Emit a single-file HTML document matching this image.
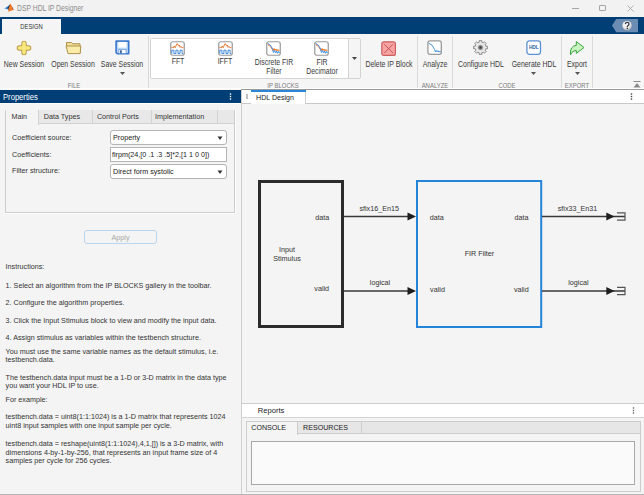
<!DOCTYPE html>
<html><head><meta charset="utf-8">
<style>
*{margin:0;padding:0;box-sizing:border-box}
html,body{width:644px;height:495px;overflow:hidden;background:#f4f4f4;font-family:"Liberation Sans",sans-serif;color:#333}
.a{position:absolute}
.t{position:absolute;white-space:nowrap;line-height:1}
/* title bar */
#title{left:0;top:0;width:644px;height:17px;background:#f2f2f2}
#band{left:0;top:17px;width:644px;height:17px;background:#003e76}
#strip{left:0;top:34px;width:644px;height:55px;background:#f5f5f5}
.lbl{font-size:8.2px;color:#3a3a3a;text-align:center;transform:scaleX(0.845)}
.sec{font-size:7px;color:#7c7c7c;text-align:center;transform:scaleX(0.85)}
.sep{position:absolute;top:36px;width:1px;height:52px;background:#dadada}
.content{font-size:7.2px;color:#333}
</style></head><body>

<!-- Title bar -->
<div class="a" id="title"></div>
<svg class="a" style="left:0;top:0" width="16" height="14" viewBox="0 0 16 14">
  <polygon points="4.3,8.4 9.3,5.2 8.4,9.6" fill="#3d8ee0"/>
  <polygon points="7.2,8 10.6,3.6 9,10.4" fill="#283848"/>
  <polygon points="10.7,3.6 13.2,10 8.2,11.8 8.6,8.4" fill="#f07c28"/>
  <polygon points="11.2,4.8 14,10.3 12.6,9.6" fill="#b8483a"/>
</svg>
<div class="t" style="left:16.8px;top:3.6px;font-size:8.6px;color:#8c8c8c;transform:scaleX(0.79);transform-origin:0 0">DSP HDL IP Designer</div>
<div class="a" style="left:572px;top:8px;width:7px;height:1px;background:#a6a6a6"></div>
<div class="a" style="left:599px;top:5px;width:7px;height:6px;border:1px solid #a6a6a6;border-radius:1px"></div>
<svg class="a" style="left:627px;top:5px" width="7" height="7" viewBox="0 0 7 7"><path d="M0.5 0.5L6.5 6.5M6.5 0.5L0.5 6.5" stroke="#a6a6a6" stroke-width="0.9"/></svg>

<!-- Blue band -->
<div class="a" id="band"></div>
<div class="a" style="left:2px;top:19px;width:59px;height:15px;background:#f5f5f5"></div>
<div class="t" style="left:2px;top:23px;width:59px;text-align:center;font-size:7.3px;color:#333;transform:scaleX(0.8)">DESIGN</div>
<svg class="a" style="left:612px;top:19px" width="26" height="14" viewBox="0 0 26 14">
  <defs><radialGradient id="hg" cx="0.4" cy="0.35" r="0.7"><stop offset="0" stop-color="#ffffff"/><stop offset="0.6" stop-color="#e8e8e8"/><stop offset="1" stop-color="#a8adb5"/></radialGradient></defs>
  <polygon points="0,6.6 4.2,0 26,0 26,13.3 4.2,13.3" fill="#6b8cb3"/>
  <circle cx="15.1" cy="6.6" r="4.7" fill="url(#hg)"/>
  <path d="M13.3 5.1Q13.4 3.3 15.2 3.3Q17 3.3 17 4.9Q17 5.9 16 6.5Q15.3 6.9 15.3 7.9" fill="none" stroke="#343a48" stroke-width="1.3"/>
  <rect x="14.6" y="8.7" width="1.4" height="1.4" fill="#343a48"/>
</svg>

<!-- Toolstrip -->
<div class="a" id="strip"></div>
<div class="a" style="left:0;top:88px;width:644px;height:1px;background:#ffffff"></div>
<div class="a" style="left:241px;top:89px;width:403px;height:1px;background:#9a9a9a"></div>


<!-- separators -->
<div class="sep" style="left:148px"></div>
<div class="sep" style="left:417px"></div>
<div class="sep" style="left:452px"></div>
<div class="sep" style="left:561px"></div>
<div class="sep" style="left:592px"></div>

<!-- FILE -->
<svg class="a" style="left:16px;top:40px" width="16" height="16" viewBox="0 0 16 16">
  <path d="M8 3.4V12.6M3.4 8H12.6" stroke="#b99b45" stroke-width="5.4" stroke-linecap="round"/><path d="M8 3.4V12.6M3.4 8H12.6" stroke="#f7e77c" stroke-width="3.6" stroke-linecap="round"/>
</svg>
<svg class="a" style="left:65px;top:41px" width="17" height="14" viewBox="0 0 17 14">
  <path d="M1.5 5V1.5h5l1.3 1.3h7.2V12" fill="#efdc98" stroke="#b0924c" stroke-width="1" stroke-linejoin="round"/>
  <path d="M1 5h14.8l-0.6 7.6H3z" fill="#f8eca8" stroke="#b0924c" stroke-width="1" stroke-linejoin="round"/>
</svg>
<svg class="a" style="left:114.8px;top:40px" width="15" height="15" viewBox="0 0 15 15">
  <path d="M1.1 1.1h12.6v12.6H2.3l-1.2-1.2z" fill="#b9d5f4" stroke="#3878cc" stroke-width="1.6" stroke-linejoin="round"/>
  <rect x="3.2" y="1.9" width="8.4" height="5.8" fill="#ffffff"/>
  <rect x="3.9" y="9.4" width="7.1" height="4" fill="#ffffff" stroke="#4f8ad6" stroke-width="0.6"/>
  <rect x="5.2" y="10.2" width="1.5" height="3.1" fill="#1a4a88"/>
</svg>
<div class="t lbl" style="left:-16px;top:60.9px;width:80px">New Session</div>
<div class="t lbl" style="left:33px;top:60.9px;width:80px">Open Session</div>
<div class="t lbl" style="left:82px;top:60.9px;width:80px">Save Session</div>
<svg class="a" style="left:120px;top:72px" width="5" height="3" viewBox="0 0 5 3"><path d="M0 0h5l-2.5 3z" fill="#555"/></svg>
<div class="t sec" style="left:34px;top:82.3px;width:80px">FILE</div>

<!-- IP BLOCKS gallery -->
<div class="a" style="left:150px;top:38px;width:211px;height:41px;border:1px solid #d4d4d4;border-radius:2px;background:#f5f5f5"></div>
<div class="a" style="left:151px;top:39px;width:197px;height:39px;background:#ffffff"></div>
<div class="a" style="left:348px;top:39px;width:1px;height:39px;background:#d4d4d4"></div>
<svg class="a" style="left:352px;top:57px" width="5" height="3" viewBox="0 0 5 3"><path d="M0 0h5l-2.5 3z" fill="#444"/></svg>

<svg class="a" style="left:170px;top:41.3px" width="15" height="15" viewBox="0 0 15 15">
  <rect x="0.75" y="0.75" width="13.5" height="13.5" rx="2" fill="#fff" stroke="#999999" stroke-width="1.2"/>
  <path d="M1.6 6.9L2.6 5.9L3.4 7.1L4.3 5.1L5.3 6.6L6.3 4.1L7.3 2.6L8.3 4.6L9.1 3.9L10.1 6.4L11.1 5.4L12.1 6.9L13.4 6.1" fill="none" stroke="#e8752c" stroke-width="1"/>
  <path d="M1.8 12.6V9.2H3.9V12.6H5.9V9.2H8V12.6H10V9.2H12.1V12.6H13.2" fill="none" stroke="#3f8ad8" stroke-width="1"/>
</svg>
<svg class="a" style="left:218px;top:41.3px" width="15" height="15" viewBox="0 0 15 15">
  <rect x="0.75" y="0.75" width="13.5" height="13.5" rx="2" fill="#fff" stroke="#999999" stroke-width="1.2"/>
  <path d="M1.6 6.9L2.6 5.9L3.4 7.1L4.3 5.1L5.3 6.6L6.3 4.1L7.3 2.6L8.3 4.6L9.1 3.9L10.1 6.4L11.1 5.4L12.1 6.9L13.4 6.1" fill="none" stroke="#e8752c" stroke-width="1"/>
  <path d="M1.8 12.6V9.2H3.9V12.6H5.9V9.2H8V12.6H10V9.2H12.1V12.6H13.2" fill="none" stroke="#3f8ad8" stroke-width="1"/>
</svg>
<svg class="a" style="left:266px;top:41.3px" width="15" height="15" viewBox="0 0 15 15">
  <rect x="0.75" y="0.75" width="13.5" height="13.5" rx="2" fill="#fff" stroke="#999999" stroke-width="1.2"/>
  <path d="M1.6 3.2Q5 5 7 9.5L8 7.5L9 9.5L10 8L11 10L12 8.5L13.2 10" fill="none" stroke="#e8752c" stroke-width="1"/>
  <path d="M1.6 2.4Q6 4 7.5 11.5L8.6 9.5L9.6 12L10.6 10L11.6 12.3L12.6 10.5L13.3 12" fill="none" stroke="#3f8ad8" stroke-width="1"/>
</svg>
<svg class="a" style="left:314px;top:41.3px" width="15" height="15" viewBox="0 0 15 15">
  <rect x="0.75" y="0.75" width="13.5" height="13.5" rx="2" fill="#fff" stroke="#999999" stroke-width="1.2"/>
  <path d="M1.6 3.2Q5 5 7 9.5L8 7.5L9 9.5L10 8L11 10L12 8.5L13.2 10" fill="none" stroke="#e8752c" stroke-width="1"/>
  <path d="M1.6 2.4Q6 4 7.5 11.5L8.6 9.5L9.6 12L10.6 10L11.6 12.3L12.6 10.5L13.3 12" fill="none" stroke="#3f8ad8" stroke-width="1"/>
</svg>
<div class="t lbl" style="left:138px;top:58px;width:80px">FFT</div>
<div class="t lbl" style="left:185px;top:58px;width:80px">IFFT</div>
<div class="t lbl" style="left:234px;top:57.6px;width:80px;line-height:9.4px">Discrete FIR<br>Filter</div>
<div class="t lbl" style="left:282px;top:57.6px;width:80px;line-height:9.4px">FIR<br>Decimator</div>

<svg class="a" style="left:381.3px;top:40.5px" width="16" height="15" viewBox="0 0 16 15">
  <rect x="0.8" y="0.8" width="13.6" height="13.6" rx="2" fill="#f5a3a3" stroke="#cf5d5d" stroke-width="1.2"/>
  <path d="M3.3 3.3L12 12M12 3.3L3.3 12" stroke="#c24c4c" stroke-width="0.9"/>
</svg>
<div class="t lbl" style="left:349px;top:60.9px;width:80px">Delete IP Block</div>
<div class="t sec" style="left:243px;top:82.3px;width:80px">IP BLOCKS</div>

<!-- ANALYZE -->
<svg class="a" style="left:427px;top:40px" width="16" height="15" viewBox="0 0 16 15">
  <rect x="0.9" y="0.9" width="13.4" height="13.4" rx="2" fill="#fff" stroke="#9a9a9a" stroke-width="1.3"/>
  <path d="M1.6 3.2Q5.5 3.8 7.6 9.6L8.3 11.8L9.1 10.2L10 11.9L11 10.6L11.9 12.1L12.8 11L13.6 12.1" fill="none" stroke="#4a97e2" stroke-width="1"/>
</svg>
<div class="t lbl" style="left:395px;top:60.9px;width:80px">Analyze</div>
<div class="t sec" style="left:395px;top:82.3px;width:80px">ANALYZE</div>

<!-- CODE -->
<svg class="a" style="left:473px;top:40px" width="15" height="15" viewBox="-7.5 -7.5 15 15">
  <defs><radialGradient id="gg"><stop offset="0" stop-color="#3a3a3a"/><stop offset="0.5" stop-color="#777"/><stop offset="1" stop-color="#e6e6e6"/></radialGradient></defs>
  <path d="M-1.39 -6.86 L1.39 -6.86 L1.19 -5.27 L2.88 -4.57 L3.87 -5.83 L5.83 -3.87 L4.57 -2.88 L5.27 -1.19 L6.86 -1.39 L6.86 1.39 L5.27 1.19 L4.57 2.88 L5.83 3.87 L3.87 5.83 L2.88 4.57 L1.19 5.27 L1.39 6.86 L-1.39 6.86 L-1.19 5.27 L-2.88 4.57 L-3.87 5.83 L-5.83 3.87 L-4.57 2.88 L-5.27 1.19 L-6.86 1.39 L-6.86 -1.39 L-5.27 -1.19 L-4.57 -2.88 L-5.83 -3.87 L-3.87 -5.83 L-2.88 -4.57 L-1.19 -5.27Z" fill="#e9e9e9" stroke="#858585" stroke-width="0.9" stroke-linejoin="round"/>
  <circle r="3.2" fill="url(#gg)"/>
</svg>
<svg class="a" style="left:526px;top:40px" width="16" height="15" viewBox="0 0 16 15">
  <rect x="0.9" y="0.9" width="13.6" height="13.4" rx="2.5" fill="#fff" stroke="#5b90d3" stroke-width="1.3"/>
  <text x="7.7" y="9.4" font-family="Liberation Sans" font-weight="bold" font-size="4.9" fill="#2f5f9a" text-anchor="middle" letter-spacing="-0.2">HDL</text>
</svg>
<div class="t lbl" style="left:441px;top:60.9px;width:80px">Configure HDL</div>
<div class="t lbl" style="left:494px;top:60.9px;width:80px">Generate HDL</div>
<svg class="a" style="left:531px;top:72px" width="5" height="3" viewBox="0 0 5 3"><path d="M0 0h5l-2.5 3z" fill="#555"/></svg>
<div class="t sec" style="left:467px;top:82.3px;width:80px">CODE</div>

<!-- EXPORT -->
<svg class="a" style="left:569px;top:41px" width="16" height="15" viewBox="0 0 16 15">
  <path d="M7.3 0.6L15 6.5L7.3 12.4V9.4Q3.4 9.2 1.4 13.8Q0.8 5 7.3 4.4Z" fill="#c9f3c0" stroke="#3ca63c" stroke-width="1" stroke-linejoin="round"/>
</svg>
<div class="t lbl" style="left:537px;top:60.9px;width:80px">Export</div>
<svg class="a" style="left:575px;top:72px" width="5" height="3" viewBox="0 0 5 3"><path d="M0 0h5l-2.5 3z" fill="#555"/></svg>
<div class="t sec" style="left:537px;top:82.3px;width:80px">EXPORT</div>
<svg class="a" style="left:633px;top:81px" width="8" height="7" viewBox="0 0 8 7"><rect x="0.5" y="0" width="7" height="1" fill="#8a8a8a"/><path d="M0.5 6.5h7l-3.5-4.5z" fill="#8a8a8a"/></svg>


<!-- ===== Properties panel ===== -->
<div class="a" style="left:0;top:90px;width:241px;height:13px;background:#003e76"></div>
<div class="t" style="left:3.3px;top:92.9px;font-size:8.9px;color:#ffffff;transform:scaleX(0.86);transform-origin:0 0">Properties</div>
<svg class="a" style="left:229px;top:93px" width="3" height="7" viewBox="0 0 3 7"><rect x="0.8" y="0.3" width="1.4" height="1.4" fill="#fff"/><rect x="0.8" y="2.8" width="1.4" height="1.4" fill="#fff"/><rect x="0.8" y="5.3" width="1.4" height="1.4" fill="#fff"/></svg>
<div class="a" style="left:0;top:103px;width:241px;height:1px;background:#ffffff"></div>
<div class="a" style="left:241px;top:90px;width:1px;height:404px;background:#cfcfcf"></div>

<!-- tab group -->
<div class="a" style="left:5px;top:110px;width:230px;height:103px;border:1px solid #cdcdcd;background:#f4f4f4"></div>
<div class="a" style="left:235px;top:110px;width:1px;height:104px;background:#ffffff"></div>
<div class="a" style="left:5px;top:213px;width:231px;height:1px;background:#ffffff"></div>
<div class="a" style="left:6px;top:110px;width:228px;height:14px;background:#e8e8e8;border-bottom:1px solid #d2d2d2"></div>
<div class="a" style="left:6px;top:110px;width:32.5px;height:15px;background:#f4f4f4;border-right:1px solid #d2d2d2"></div>
<div class="a" style="left:92px;top:110px;width:1px;height:13px;background:#d2d2d2"></div>
<div class="a" style="left:150.5px;top:110px;width:1px;height:13px;background:#d2d2d2"></div>
<div class="a" style="left:217px;top:110px;width:1px;height:13px;background:#d2d2d2"></div>
<div class="t content" style="left:11.5px;top:113.4px">Main</div>
<div class="t content" style="left:43.8px;top:113.4px">Data Types</div>
<div class="t content" style="left:96.9px;top:113.4px">Control Ports</div>
<div class="t content" style="left:155px;top:113.4px">Implementation</div>

<div class="t content" style="left:12px;top:134px">Coefficient source:</div>
<div class="t content" style="left:12px;top:150.5px">Coefficients:</div>
<div class="t content" style="left:12px;top:167px">Filter structure:</div>

<div class="a" style="left:110px;top:130px;width:117px;height:15px;border:1px solid #b4b4b4;border-radius:3px;background:#fff"></div>
<div class="t content" style="left:113px;top:134px;color:#222">Property</div>
<svg class="a" style="left:217px;top:135.5px" width="6" height="5" viewBox="0 0 6 5"><path d="M0.5 0.5h5l-2.5 3.6z" fill="#333"/></svg>
<div class="a" style="left:110px;top:147px;width:117px;height:15px;border:1px solid #b4b4b4;background:#fff"></div>
<div class="t content" style="left:112px;top:151px;color:#222">firpm(24,[0 .1 .3 .5]*2,[1 1 0 0])</div>
<div class="a" style="left:110px;top:164px;width:117px;height:15px;border:1px solid #b4b4b4;border-radius:3px;background:#fff"></div>
<div class="t content" style="left:113px;top:168px;color:#222">Direct form systolic</div>
<svg class="a" style="left:217px;top:169.5px" width="6" height="5" viewBox="0 0 6 5"><path d="M0.5 0.5h5l-2.5 3.6z" fill="#333"/></svg>

<div class="a" style="left:84px;top:230px;width:73px;height:14px;border:1px solid #b9d5ee;border-radius:3px;background:#f4f4f4"></div>
<div class="t content" style="left:84px;top:234px;width:73px;text-align:center;color:#a8a8a8">Apply</div>

<div class="t content" style="left:5.6px;top:263.4px">Instructions:</div>
<div class="t content" style="left:5.6px;top:281.5px">1. Select an algorithm from the IP BLOCKS gallery in the toolbar.</div>
<div class="t content" style="left:5.6px;top:299.2px">2. Configure the algorithm properties.</div>
<div class="t content" style="left:5.6px;top:316.9px">3. Click the Input Stimulus block to view and modify the input data.</div>
<div class="t content" style="left:5.6px;top:334.2px">4. Assign stimulus as variables within the testbench structure.</div>
<div class="t content" style="left:5.6px;top:347.5px">You must use the same variable names as the default stimulus, i.e.</div>
<div class="t content" style="left:5.6px;top:356.3px">testbench.data.</div>
<div class="t content" style="left:5.6px;top:373.6px">The testbench.data input must be a 1-D or 3-D matrix in the data type</div>
<div class="t content" style="left:5.6px;top:382.4px">you want your HDL IP to use.</div>
<div class="t content" style="left:5.6px;top:395.6px">For example:</div>
<div class="t content" style="left:5.6px;top:413.4px">testbench.data = uint8(1:1:1024) is a 1-D matrix that represents 1024</div>
<div class="t content" style="left:5.6px;top:422.2px">uint8 input samples with one input sample per cycle.</div>
<div class="t content" style="left:5.6px;top:439.9px">testbench.data = reshape(uint8(1:1:1024),4,1,[]) is a 3-D matrix, with</div>
<div class="t content" style="left:5.6px;top:448.6px">dimensions 4-by-1-by-256, that represents an input frame size of 4</div>
<div class="t content" style="left:5.6px;top:457.2px">samples per cycle for 256 cycles.</div>


<!-- ===== HDL Design area ===== -->
<div class="a" style="left:242px;top:90px;width:402px;height:13px;background:#ffffff"></div>
<div class="a" style="left:242px;top:103px;width:402px;height:1px;background:#c8c8c8"></div>
<div class="a" style="left:250.5px;top:90px;width:1px;height:13px;background:#dcdcdc"></div>
<div class="a" style="left:245.5px;top:94px;width:2px;height:5px;border-left:1px solid #bdbdbd;border-right:1px solid #bdbdbd"></div>
<div class="a" style="left:251px;top:90px;width:55px;height:14px;background:#ffffff;border-right:1px solid #d0d0d0"></div>
<div class="a" style="left:251px;top:90px;width:55px;height:2px;background:#2a86d8"></div>
<div class="t content" style="left:256.4px;top:93.9px;font-size:7.6px;color:#222;transform:scaleX(0.935);transform-origin:0 0">HDL Design</div>
<svg class="a" style="left:630px;top:93px" width="3" height="7" viewBox="0 0 3 7"><rect x="0.8" y="0.3" width="1.4" height="1.4" fill="#444"/><rect x="0.8" y="2.8" width="1.4" height="1.4" fill="#444"/><rect x="0.8" y="5.3" width="1.4" height="1.4" fill="#444"/></svg>

<!-- diagram -->
<svg class="a" style="left:0;top:0" width="644" height="495" viewBox="0 0 644 495">
  <rect x="259.5" y="181.5" width="83" height="145" fill="none" stroke="#2b2b2b" stroke-width="3"/>
  <rect x="417" y="181" width="124.2" height="146" fill="none" stroke="#2484d8" stroke-width="2"/>
  <g stroke="#383838" stroke-width="1.3">
    <line x1="344" y1="216.5" x2="409" y2="216.5"/>
    <line x1="344" y1="291" x2="409" y2="291"/>
    <line x1="542" y1="216.5" x2="625" y2="216.5"/>
    <line x1="542" y1="291" x2="625" y2="291"/>
  </g>
  <g fill="#1e1e1e">
    <path d="M407.5 212.6L416 216.5L407.5 220.4z"/>
    <path d="M407.5 287.1L416 291L407.5 294.9z"/>
    <path d="M606.3 212.6L614.5 216.5L606.3 220.4z"/>
    <path d="M606.3 287.1L614.5 291L606.3 294.9z"/>
  </g>
  <g fill="none" stroke="#555" stroke-width="1.2">
    <path d="M617 212.9H625V220.1H617"/>
    <path d="M617 287.4H625V294.6H617"/>
  </g>
</svg>
<div class="t content" style="left:315.2px;top:214.4px">data</div>
<div class="t content" style="left:314.3px;top:285.4px">valid</div>
<div class="t content" style="left:259px;top:244.5px;width:56px;text-align:center;line-height:9.1px;white-space:normal">Input<br>Stimulus</div>
<div class="t content" style="left:359.4px;top:204.7px">sfix16_En15</div>
<div class="t content" style="left:369.8px;top:279.4px">logical</div>
<div class="t content" style="left:429.8px;top:213.6px">data</div>
<div class="t content" style="left:430.1px;top:285.9px">valid</div>
<div class="t content" style="left:514.5px;top:213.6px">data</div>
<div class="t content" style="left:513.9px;top:285.7px">valid</div>
<div class="t content" style="left:464.7px;top:250.2px">FIR Filter</div>
<div class="t content" style="left:557.7px;top:204.6px">sfix33_En31</div>
<div class="t content" style="left:568.2px;top:278.9px">logical</div>

<!-- Reports -->
<div class="a" style="left:242px;top:403px;width:402px;height:1px;background:#cdcdcd"></div>
<div class="a" style="left:242px;top:404px;width:402px;height:13px;background:#ffffff"></div>
<div class="a" style="left:242px;top:417px;width:402px;height:1px;background:#d4d4d4"></div>
<div class="t content" style="left:257.8px;top:406.9px;font-size:7.6px;color:#222">Reports</div>
<svg class="a" style="left:632px;top:407px" width="3" height="7" viewBox="0 0 3 7"><rect x="0.8" y="0.3" width="1.4" height="1.4" fill="#666"/><rect x="0.8" y="2.8" width="1.4" height="1.4" fill="#666"/><rect x="0.8" y="5.3" width="1.4" height="1.4" fill="#666"/></svg>

<div class="a" style="left:245.5px;top:421px;width:395.5px;height:70.5px;border:1px solid #cdcdcd;background:#f4f4f4"></div>
<div class="a" style="left:246.5px;top:422px;width:393.5px;height:12.4px;background:#e6e6e6;border-bottom:1px solid #cdcdcd"></div>
<div class="a" style="left:246.5px;top:422px;width:51px;height:13.4px;background:#f4f4f4;border-right:1px solid #cdcdcd"></div>
<div class="a" style="left:360.5px;top:422px;width:1px;height:12.4px;background:#cdcdcd"></div>
<div class="t content" style="left:251.3px;top:425px;font-size:7.1px;color:#222">CONSOLE</div>
<div class="t content" style="left:303.1px;top:425px;font-size:7.1px;color:#222">RESOURCES</div>
<div class="a" style="left:251px;top:441px;width:384px;height:44px;border:1px solid #a8a8a8;background:#fafafa"></div>
<div class="a" style="left:0;top:493.5px;width:644px;height:1.5px;background:#b4b4b4"></div>

</body></html>
